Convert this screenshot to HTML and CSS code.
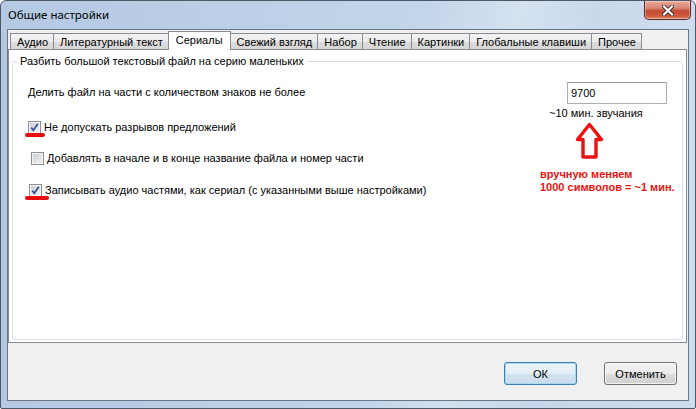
FILE: index.html
```html
<!DOCTYPE html>
<html lang="ru">
<head>
<meta charset="utf-8">
<title>Общие настройки</title>
<link rel="stylesheet" href="styles.css">
</head>
<body>
<div class="window">
  <div class="titlebar">
    <span class="title">Общие настройки</span>
    <div class="close">
      <svg width="12" height="11" viewBox="0 0 12 11">
        <path d="M2 1.5 L10 9.5 M10 1.5 L2 9.5" stroke="#3b2320" stroke-width="4" stroke-linecap="square"/>
        <path d="M2 1.5 L10 9.5 M10 1.5 L2 9.5" stroke="#ffffff" stroke-width="2.2" stroke-linecap="square"/>
      </svg>
    </div>
  </div>
  <div class="client">
    <div class="tabs">
      <div class="tab">Аудио</div>
      <div class="tab">Литературный текст</div>
      <div class="tab active">Сериалы</div>
      <div class="tab">Свежий взгляд</div>
      <div class="tab">Набор</div>
      <div class="tab">Чтение</div>
      <div class="tab">Картинки</div>
      <div class="tab">Глобальные клавиши</div>
      <div class="tab">Прочее</div>
    </div>
    <div class="panel">
      <fieldset class="group">
        <legend>Разбить большой текстовый файл на серию маленьких</legend>
        <div class="group-body">
          <div class="left">
            <div class="line">Делить файл на части с количеством знаков не более</div>
            <div class="check check-1">
              <span class="box">
                <svg width="11" height="11" viewBox="0 0 11 11"><path d="M2.2 5.6 L4.4 8.2 L8.8 1.8" fill="none" stroke="#3d5596" stroke-width="1.8"/></svg>
              </span>
              <span class="label">Не допускать разрывов предложений</span>
              <span class="mark mark-1"></span>
            </div>
            <div class="check check-2">
              <span class="box"></span>
              <span class="label">Добавлять в начале и в конце название файла и номер части</span>
            </div>
            <div class="check check-3">
              <span class="box">
                <svg width="11" height="11" viewBox="0 0 11 11"><path d="M2.2 5.6 L4.4 8.2 L8.8 1.8" fill="none" stroke="#3d5596" stroke-width="1.8"/></svg>
              </span>
              <span class="label">Записывать аудио частями, как сериал (с указанными выше настройками)</span>
              <span class="mark mark-3"></span>
            </div>
          </div>
          <div class="right">
            <div class="field">9700</div>
            <div class="caption">~10 мин. звучания</div>
            <svg class="arrow" width="28" height="38" viewBox="0 0 28 38">
              <path d="M13.5 2.5 L25.5 17.5 L20 17.5 L20 35 L7 35 L7 17.5 L1.5 17.5 Z" fill="none" stroke="#ee1111" stroke-width="3.4" stroke-linejoin="round"/>
            </svg>
            <div class="note">вручную меняем<br>1000 символов = ~1 мин.</div>
          </div>
        </div>
      </fieldset>
    </div>
    <div class="buttons">
      <button class="btn btn-default">ОК</button>
      <button class="btn">Отменить</button>
    </div>
  </div>
</div>
</body>
</html>
```
FILE: styles.css
```css
* { box-sizing: border-box; }
html, body { margin: 0; padding: 0; }
body {
  width: 696px;
  height: 409px;
  overflow: hidden;
  font-family: "Liberation Sans", Arial, sans-serif;
  font-size: 11px;
  color: #000;
}
.window {
  width: 696px;
  height: 409px;
  border: 1px solid #4f5966;
  border-radius: 6px 6px 2px 2px;
  background:
    linear-gradient(100deg, rgba(255,255,255,0) 55%, rgba(255,255,255,0.25) 68%, rgba(255,255,255,0) 78%),
    linear-gradient(to right, #b4c9e2 0%, #bfd3e9 50%, #cddcee 100%);
  display: flex;
  flex-direction: column;
  overflow: hidden;
}
.titlebar {
  height: 28px;
  display: flex;
  justify-content: space-between;
  align-items: flex-start;
  padding: 0 4px 0 7px;
}
.title {
  font-family: "Noto Sans", "Liberation Sans", sans-serif;
  font-size: 11.5px;
  line-height: 16px;
  padding-top: 6px;
  color: #000;
}
.close {
  width: 47px;
  height: 19px;
  border: 1px solid #5a2a22;
  border-top: 0;
  border-radius: 0 0 5px 5px;
  background: linear-gradient(to bottom, #e9a99b 0%, #d98573 40%, #c34a32 55%, #cf5d3f 85%, #e08b6c 100%);
  box-shadow: inset 0 0 0 1px rgba(255,255,255,0.35);
  display: flex;
  align-items: center;
  justify-content: center;
}
.client {
  flex: 1;
  margin: 0 6px 7px 6px;
  border: 1px solid #6c7584;
  background: #f0f0f0;
  display: flex;
  flex-direction: column;
  padding-top: 1px;
}
.tabs {
  height: 18px;
  display: flex;
  align-items: flex-end;
  padding-left: 3px;
}
.tab {
  height: 16px;
  padding: 2px 5px 0 6px;
  line-height: 13px;
  border: 1px solid #898c95;
  border-bottom: 0;
  margin-left: -1px;
  background: linear-gradient(to bottom, #f3f3f3 0%, #ebebeb 50%, #dddddd 51%, #d6d6d6 100%);
  white-space: nowrap;
}
.tab.active {
  height: 19px;
  margin-bottom: -1px;
  padding: 2px 7px 0 7px;
  background: #fff;
  position: relative;
  z-index: 1;
}
.panel {
  height: 294px;
  margin-right: 1px;
  border: 1px solid #898c95;
  background: #fff;
  display: flex;
  flex-direction: column;
}
.group {
  flex: 1;
  margin: 5px 3px 2px 3px;
  padding: 0;
  border: 1px solid #d5dfe5;
  border-radius: 3px;
  min-width: 0;
}
.group legend {
  margin-left: 4px;
  padding: 0 3px;
  line-height: 13px;
}
.group-body {
  display: flex;
}
.left {
  flex: 1;
  padding-left: 15px;
}
.line {
  margin-top: 18px;
  line-height: 13px;
}
.check {
  position: relative;
  display: flex;
  align-items: center;
  height: 13px;
  line-height: 13px;
  white-space: nowrap;
}
.check-1 { margin-top: 22px; }
.check-2 { margin-top: 18px; margin-left: 3px; }
.check-3 { margin-top: 19px; margin-left: 1px; }
.box {
  width: 13px;
  height: 13px;
  border: 1px solid #8e8f8f;
  background: linear-gradient(135deg, #c9ccd2 0%, #e2e4e7 60%, #f4f4f4 100%);
  box-shadow: inset 0 0 0 1px #f4f4f4;
  margin-right: 3px;
  display: flex;
  align-items: center;
  justify-content: center;
  flex: none;
}
.mark {
  position: absolute;
  top: 12px;
  height: 4px;
  border-radius: 2px;
  background: #e80c0c;
}
.mark-1 { left: -3px; width: 20px; }
.mark-3 { left: -4px; width: 24px; }
.right {
  width: 142px;
  flex: none;
}
.field {
  margin-top: 14px;
  margin-left: 27px;
  width: 100px;
  height: 22px;
  border: 1px solid #abadb3;
  border-top-color: #9a9ca2;
  background: #fff;
  padding: 3px 0 0 3px;
  line-height: 14px;
}
.caption {
  margin-top: 3px;
  margin-left: 9px;
  line-height: 13px;
}
.arrow {
  display: block;
  margin-top: 2px;
  margin-left: 36px;
}
.note {
  margin-top: 8px;
  line-height: 13px;
  font-weight: bold;
  color: #ee1111;
  white-space: nowrap;
}
.buttons {
  display: flex;
  justify-content: flex-end;
  gap: 27px;
  padding: 19px 11px 0 0;
}
.btn {
  width: 73px;
  height: 23px;
  border: 1px solid #707070;
  border-radius: 3px;
  font-family: "Liberation Sans", Arial, sans-serif;
  font-size: 11px;
  color: #000;
  background: linear-gradient(to bottom, #f2f2f2 0%, #ebebeb 50%, #dddddd 51%, #cfcfcf 100%);
  box-shadow: inset 0 0 0 1px rgba(255,255,255,0.7);
  padding: 0;
}
.btn-default {
  border-color: #3c7fb1;
  background: linear-gradient(to bottom, #eef5fb 0%, #e3eef7 50%, #d3e3f0 51%, #c9dcec 100%);
  box-shadow: inset 0 0 0 1px #a8d8f0;
}
```
